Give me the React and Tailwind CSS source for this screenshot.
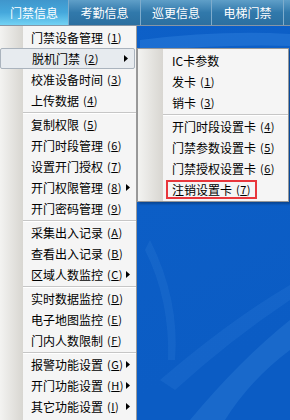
import React from "react";

const FONT = "font-['Noto_Sans_CJK_SC','Liberation_Sans',sans-serif]";

const TABS = [
  { label: "门禁信息", w: "w-[68px]", active: true },
  { label: "考勤信息", w: "w-[71px]" },
  { label: "巡更信息", w: "w-[70px]" },
  { label: "电梯门禁", w: "w-[71px]" },
];

const MAIN = [
  { t: "门禁设备管理", k: "1" },
  { t: "脱机门禁", k: "2", sub: true, hover: true },
  { t: "校准设备时间", k: "3" },
  { t: "上传数据", k: "4" },
  "sep",
  { t: "复制权限", k: "5" },
  { t: "开门时段管理", k: "6" },
  { t: "设置开门授权", k: "7" },
  { t: "开门权限管理", k: "8", sub: true },
  { t: "开门密码管理", k: "9" },
  "sep",
  { t: "采集出入记录", k: "A" },
  { t: "查看出入记录", k: "B" },
  { t: "区域人数监控", k: "C", sub: true },
  "sep",
  { t: "实时数据监控", k: "D" },
  { t: "电子地图监控", k: "E" },
  { t: "门内人数限制", k: "F" },
  "sep",
  { t: "报警功能设置", k: "G", sub: true },
  { t: "开门功能设置", k: "H", sub: true },
  { t: "其它功能设置", k: "I", sub: true },
];

const SUB = [
  { t: "IC卡参数" },
  { t: "发卡", k: "1" },
  { t: "销卡", k: "3" },
  "sep",
  { t: "开门时段设置卡", k: "4" },
  { t: "门禁参数设置卡", k: "5" },
  { t: "门禁授权设置卡", k: "6" },
  { t: "注销设置卡", k: "7", boxed: true },
];

// small black submenu arrow
const Arrow = () => (
  <svg width="4" height="7" viewBox="0 0 4 7" className="shrink-0">
    <path d="M0 0 L4 3.5 L0 7 Z" fill="#000" />
  </svg>
);

const Label = ({ item }) => (
  <span className="whitespace-nowrap flex items-center">
    {item.t}
    {item.k && (
      <span className="ml-[4px] text-[11px] tracking-[0.5px]">
        (<span className="underline underline-offset-1">{item.k}</span>)
      </span>
    )}
  </span>
);

const Separator = ({ left }) => (
  <div className={`h-[3px] flex flex-col justify-center ${left}`}>
    <div className="border-t border-[#c6c6c6] border-b border-b-white" />
  </div>
);

const MainRow = ({ item }) => (
  <div
    className={`h-[21px] flex items-center pl-[31px] pr-[6px] text-[12px] text-black ${
      item.hover
        ? "bg-[#e7ebef] border border-[#aab3bd] rounded-[2px] pl-[30px] pr-[5px] mr-[1px]"
        : ""
    }`}
  >
    <Label item={item} />
    <div className="flex-1" />
    {item.sub && <Arrow />}
  </div>
);

const SubRow = ({ item }) => (
  <div className="h-[21px] flex items-center pl-[34px] text-[12px] text-black">
    {item.boxed ? (
      <span className="h-[19px] inline-flex items-center border-2 border-[#e8363c] -ml-[6px] pl-[4px] pr-[4px]">
        <Label item={item} />
      </span>
    ) : (
      <Label item={item} />
    )}
  </div>
);

const Wallpaper = () => (
  <svg
    className="absolute inset-0"
    width="290"
    height="420"
    viewBox="0 0 290 420"
    preserveAspectRatio="none"
  >
    <defs>
      <linearGradient id="wp" x1="0" y1="0" x2="0.3" y2="1">
        <stop offset="0" stopColor="#1f78dc" />
        <stop offset="0.12" stopColor="#0d60c8" />
        <stop offset="1" stopColor="#0b5cc4" />
      </linearGradient>
    </defs>
    <rect width="290" height="420" fill="url(#wp)" />
    <path d="M140 40 Q220 30 290 34 L290 46 Q220 44 140 52 Z" fill="#4a9cf0" opacity="0.25" />
    <path d="M190 420 Q240 360 290 320 L290 350 Q250 380 225 420 Z" fill="#5aa6f0" opacity="0.18" />
    <path d="M160 380 Q230 320 290 285 L290 300 Q230 340 175 390 Z" fill="#5aa6f0" opacity="0.12" />
    <path d="M150 240 Q180 300 175 360 L168 360 Q170 300 145 250 Z" fill="#6ab0f4" opacity="0.1" />
  </svg>
);

export default function App() {
  return (
    <div className={`relative w-[290px] h-[420px] overflow-hidden ${FONT}`}>
      <Wallpaper />

      <div className="relative flex flex-col h-full">
        {/* ================= TAB BAR ================= */}
        <div className="flex h-[26px] border-b border-[#8696a6] bg-gradient-to-b from-[#5f9fc8] via-[#3179ab] to-[#2b6fa0]">
          {TABS.map((tab) => (
            <React.Fragment key={tab.label}>
              <div
                className={`${tab.w} flex items-center justify-center text-[12px] text-white ${
                  tab.active
                    ? "bg-gradient-to-b from-[#3f96cc] via-[#45a8dc] to-[#72d2f4]"
                    : ""
                }`}
              >
                {tab.label}
              </div>
              <div className="w-px bg-[#7eaccc]" />
            </React.Fragment>
          ))}
          <div className="flex-1" />
        </div>

        {/* ================= MENUS ================= */}
        <div className="flex flex-1 items-start">
          {/* main menu */}
          <div className="relative w-[137px] self-stretch bg-[#f5f5f5] border-r border-[#9a9a9a] pt-[1px]">
            <div className="absolute left-0 top-0 bottom-0 w-[23px] bg-gradient-to-r from-[#f3f3f1] to-[#d8d6d1]" />
            <div className="relative">
              {MAIN.map((item, i) =>
                item === "sep" ? (
                  <Separator key={i} left="ml-[23px]" />
                ) : (
                  <MainRow key={i} item={item} />
                )
              )}
            </div>
          </div>

          {/* sub menu */}
          <div className="relative mt-[22px] w-[152px] bg-[#f5f5f5] border border-[#979797] py-[1px] shadow-[2px_2px_2px_rgba(0,0,0,0.25)]">
            <div className="absolute left-0 top-0 bottom-0 w-[25px] bg-gradient-to-r from-[#f3f3f1] to-[#d8d6d1]" />
            <div className="relative">
              {SUB.map((item, i) =>
                item === "sep" ? (
                  <Separator key={i} left="ml-[25px]" />
                ) : (
                  <SubRow key={i} item={item} />
                )
              )}
            </div>
          </div>
        </div>
      </div>
    </div>
  );
}
